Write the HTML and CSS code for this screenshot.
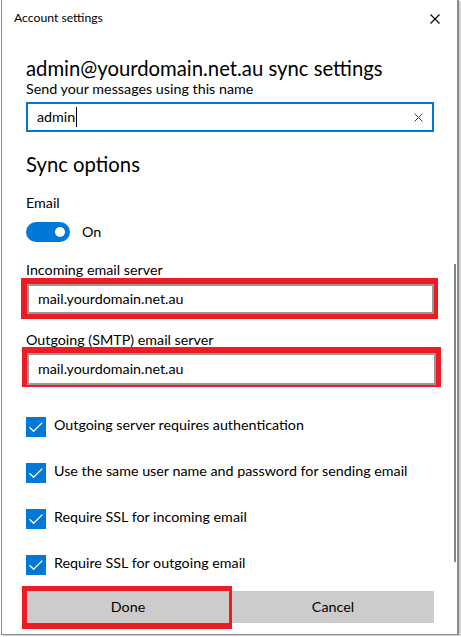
FILE: index.html
```html
<!DOCTYPE html>
<html lang="en">
<head>
<meta charset="utf-8">
<title>Account settings</title>
<link rel="stylesheet" href="styles.css">
</head>
<body>
<div class="window">
  <div class="titlebar">
    <span class="title">Account settings</span>
    <svg class="close" width="10" height="10" viewBox="0 0 10 10"><path d="M0.5 0.5L9.5 9.5M9.5 0.5L0.5 9.5" stroke="#000" stroke-width="1.1" fill="none"/></svg>
  </div>
  <div class="scrollbar"></div>
  <div class="content">
    <div class="heading">admin@yourdomain.net.au sync settings</div>
    <div class="label label-send">Send your messages using this name</div>
    <div class="textbox focused">
      <span class="value">admin</span><span class="caret"></span>
      <svg class="clear" width="9" height="9" viewBox="0 0 9 9"><path d="M0.5 0.5L8.5 8.5M8.5 0.5L0.5 8.5" stroke="#444" stroke-width="1" fill="none"/></svg>
    </div>
    <div class="section">Sync options</div>
    <div class="label label-email">Email</div>
    <div class="toggle-row">
      <span class="toggle"><span class="knob"></span></span>
      <span class="toggle-text">On</span>
    </div>
    <div class="label label-in">Incoming email server</div>
    <div class="hl hl-in"><div class="textbox">mail.yourdomain.net.au</div></div>
    <div class="label label-out">Outgoing (SMTP) email server</div>
    <div class="hl hl-out"><div class="textbox tall">mail.yourdomain.net.au</div></div>
    <div class="checks">
      <div class="check"><span class="box"><svg width="20" height="20" viewBox="0 0 20 20"><path d="M3.5 10.2L7.6 14.3L16.3 5.6" stroke="#fff" stroke-width="1.3" fill="none"/></svg></span><span class="check-text">Outgoing server requires authentication</span></div>
      <div class="check"><span class="box"><svg width="20" height="20" viewBox="0 0 20 20"><path d="M3.5 10.2L7.6 14.3L16.3 5.6" stroke="#fff" stroke-width="1.3" fill="none"/></svg></span><span class="check-text">Use the same user name and password for sending email</span></div>
      <div class="check"><span class="box"><svg width="20" height="20" viewBox="0 0 20 20"><path d="M3.5 10.2L7.6 14.3L16.3 5.6" stroke="#fff" stroke-width="1.3" fill="none"/></svg></span><span class="check-text">Require SSL for incoming email</span></div>
      <div class="check"><span class="box"><svg width="20" height="20" viewBox="0 0 20 20"><path d="M3.5 10.2L7.6 14.3L16.3 5.6" stroke="#fff" stroke-width="1.3" fill="none"/></svg></span><span class="check-text">Require SSL for outgoing email</span></div>
    </div>
    <div class="buttons">
      <div class="hl hl-done"><div class="btn">Done</div></div>
      <div class="btn btn-cancel">Cancel</div>
    </div>
  </div>
</div>
</body>
</html>
```
FILE: styles.css
```css
* { box-sizing: border-box; }
html, body { margin: 0; padding: 0; }
body {
  width: 461px;
  height: 637px;
  overflow: hidden;
  background: #ffffff;
  font-family: Lato, "Noto Sans", sans-serif;
  color: #000;
}
.window {
  position: relative;
  width: 458px;
  height: 635px;
  margin-left: 1px;
  background: #fff;
  border-left: 1px solid #8a8a8a;
  border-right: 2px solid #8a8a8a;
  border-bottom: 1px solid #8a8a8a;
  box-shadow: 2px 1px 0 #d4d4d4;
}
.titlebar {
  height: 36px;
  display: flex;
  justify-content: space-between;
  align-items: flex-start;
  padding: 10px 17px 0 12px;
}
.title { font-size: 12.2px; line-height: 16px; }
.close { display: block; margin-top: 4px; }
.scrollbar {
  position: absolute;
  top: 264px;
  right: 1px;
  width: 2px;
  height: 298px;
  background: #858585;
}
.content { padding: 0 23px 0 24px; }
.heading { font-size: 20.3px; line-height: 22px; margin-top: 21px; }
.label { font-size: 14.3px; line-height: 16px; }
.label-send { margin-top: 2px; }
.label-email { margin-top: 17px; }
.label-in { margin-top: 20px; }
.label-out { margin-top: 13px; }
.section { font-size: 20.3px; line-height: 28px; margin-top: 18px; }

.textbox {
  display: flex;
  align-items: center;
  height: 30px;
  border: 2px solid #999;
  padding: 0 0 0 9px;
  font-size: 14.3px;
  line-height: 20px;
  background: #fff;
}
.textbox.tall { height: 32px; }
.textbox.focused { border-color: #0078d7; margin-top: 5px; }
.caret { display: inline-block; width: 1px; height: 20px; background: #000; margin-left: 1px; }
.clear { display: block; margin-left: auto; margin-right: 9px; }

.toggle-row { display: flex; align-items: center; margin-top: 11px; height: 20px; }
.toggle {
  display: flex;
  align-items: center;
  justify-content: flex-end;
  width: 44px;
  height: 20px;
  border-radius: 10px;
  background: #0078d7;
  padding-right: 5px;
}
.knob { width: 10px; height: 10px; border-radius: 50%; background: #fff; }
.toggle-text { font-size: 14.3px; line-height: 20px; margin-left: 12px; }

.hl { border: solid #ed1c24; }
.hl-in { border-width: 6px 4px 5px 6px; margin-left: -5px; width: 417px; }
.hl-out { border-width: 6px 5px 2px 5px; margin-left: -4px; margin-top: -1px; width: 419px; }

.checks { display: flex; flex-direction: column; gap: 26px; margin-top: 30px; }
.check { display: flex; align-items: flex-start; }
.box { display: block; width: 20px; height: 20px; background: #0078d7; flex: none; }
.box svg { display: block; }
.check-text { font-size: 14.3px; line-height: 16px; margin-left: 8px; }

.buttons { display: flex; align-items: flex-start; margin-top: 11px; margin-left: -4px; }
.hl-done { border-width: 5px 3px 6px 5px; }
.btn {
  width: 202px;
  height: 32px;
  background: #cccccc;
  font-size: 14.3px;
  line-height: 20px;
  display: flex;
  align-items: center;
  justify-content: center;
}
.btn-cancel { margin-top: 5px; }
```
